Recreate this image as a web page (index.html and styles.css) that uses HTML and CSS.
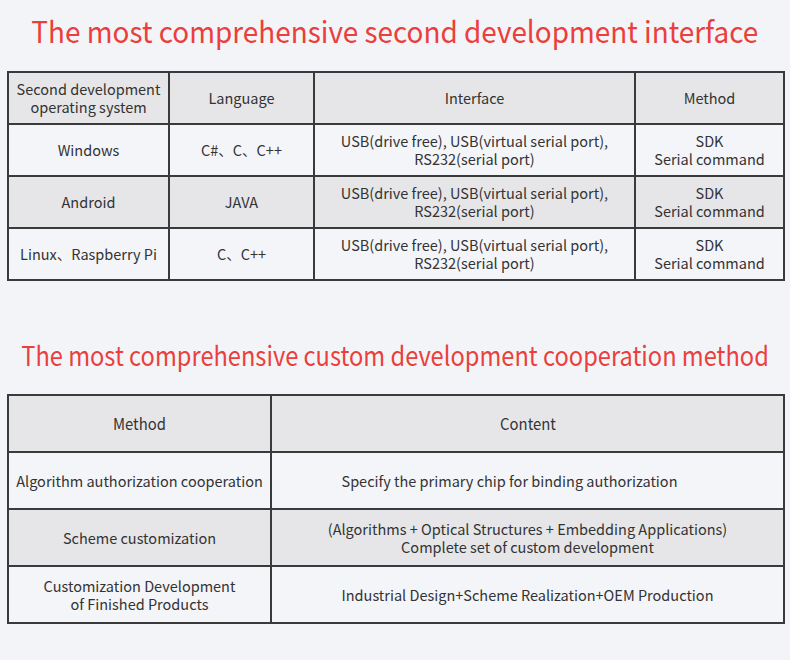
FILE: index.html
```html
<!DOCTYPE html>
<html>
<head>
<meta charset="utf-8">
<link rel="stylesheet" href="styles.css">
</head>
<body>
<div class="page">
  <h2 class="title title-first"><span class="title-text">The most comprehensive second development interface</span></h2>
  <table class="grid grid-dev">
    <colgroup>
      <col class="c-os"><col class="c-lang"><col class="c-if"><col class="c-method">
    </colgroup>
    <tr class="head">
      <td>Second development<br>operating system</td>
      <td>Language</td>
      <td>Interface</td>
      <td>Method</td>
    </tr>
    <tr>
      <td>Windows</td>
      <td>C#、C、C++</td>
      <td>USB(drive free), USB(virtual serial port),<br>RS232(serial port)</td>
      <td>SDK<br>Serial command</td>
    </tr>
    <tr class="alt">
      <td>Android</td>
      <td>JAVA</td>
      <td>USB(drive free), USB(virtual serial port),<br>RS232(serial port)</td>
      <td>SDK<br>Serial command</td>
    </tr>
    <tr>
      <td>Linux、Raspberry Pi</td>
      <td>C、C++</td>
      <td>USB(drive free), USB(virtual serial port),<br>RS232(serial port)</td>
      <td>SDK<br>Serial command</td>
    </tr>
  </table>

  <h2 class="title title-second"><span class="title-text">The most comprehensive custom development cooperation method</span></h2>
  <table class="grid grid-coop">
    <colgroup>
      <col class="c-name"><col class="c-content">
    </colgroup>
    <tr class="head">
      <td><span class="narrow">Method</span></td>
      <td><span class="narrow">Content</span></td>
    </tr>
    <tr>
      <td>Algorithm authorization cooperation</td>
      <td class="shift">Specify the primary chip for binding authorization</td>
    </tr>
    <tr class="alt">
      <td>Scheme customization</td>
      <td>(Algorithms + Optical Structures + Embedding Applications)<br>Complete set of custom development</td>
    </tr>
    <tr>
      <td>Customization Development<br>of Finished Products</td>
      <td>Industrial Design+Scheme Realization+OEM Production</td>
    </tr>
  </table>
</div>
</body>
</html>
```

FILE: styles.css
```css
html, body {
  margin: 0;
  padding: 0;
  background: #f3f4f8;
  overflow: hidden;
}

.page {
  padding: 0 7px;
  font-family: "Noto Sans CJK SC", "Noto Sans", sans-serif;
  color: #333333;
}

.title {
  margin: 0;
  display: flex;
  justify-content: center;
  font-weight: 400;
  font-size: 30px;
  line-height: 40px;
  color: #ea3f3c;
  white-space: nowrap;
}

.title-text {
  flex-shrink: 0;
  transform: scaleX(0.93);
  transform-origin: center;
}

.title-first {
  padding-top: 10px;
  margin-bottom: 21px;
}

.title-second {
  margin-top: 54px;
  margin-bottom: 19px;
  font-size: 26.5px;
}

.title-second .title-text {
  transform: scaleX(0.892);
}

.grid {
  width: 776px;
  border-collapse: collapse;
  table-layout: fixed;
  font-size: 14.5px;
  line-height: 18px;
}

.grid td {
  border: 2px solid #3a3a3a;
  text-align: center;
  vertical-align: middle;
  padding: 0;
  background: #f4f5f9;
  white-space: nowrap;
}

.grid .head td,
.grid .alt td {
  background: #e6e6e8;
}

.grid-dev tr {
  height: 52px;
}

.c-os { width: 161px; }
.c-lang { width: 145px; }
.c-if { width: 321px; }
.c-method { width: 149px; }

.grid-coop tr {
  height: 57px;
}

.c-name { width: 263px; }
.c-content { width: 513px; }

.shift {
  padding-right: 36px !important;
}

.narrow {
  display: inline-block;
  font-size: 16.5px;
  transform: scaleX(0.9);
}
```
